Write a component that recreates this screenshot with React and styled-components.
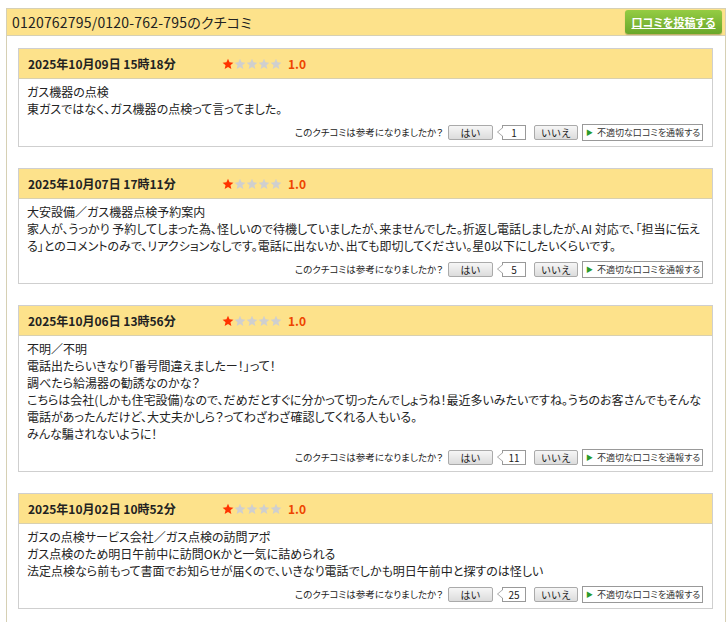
import React from 'react'
import styled, { createGlobalStyle } from 'styled-components'

const reviews = [
  {
    date: '2025年10月09日 15時18分',
    lines: ['ガス機器の点検', '東ガスではなく、ガス機器の点検って言ってました。'],
    count: 1,
  },
  {
    date: '2025年10月07日 17時11分',
    lines: [
      '大安設備／ガス機器点検予約案内',
      '家人が、うっかり 予約してしまった為、怪しいので待機していましたが、来ませんでした。折返し電話しましたが、AI 対応で、「担当に伝える」とのコメントのみで、リアクションなしです。電話に出ないか、出ても即切してください。星0以下にしたいくらいです。',
    ],
    count: 5,
  },
  {
    date: '2025年10月06日 13時56分',
    lines: [
      '不明／不明',
      '電話出たらいきなり「番号間違えましたー！」って！',
      '調べたら給湯器の勧誘なのかな？',
      'こちらは会社(しかも住宅設備)なので、だめだとすぐに分かって切ったんでしょうね！最近多いみたいですね。うちのお客さんでもそんな電話があったんだけど、大丈夫かしら？ってわざわざ確認してくれる人もいる。',
      'みんな騙されないように！',
    ],
    count: 11,
  },
  {
    date: '2025年10月02日 10時52分',
    lines: [
      'ガスの点検サービス会社／ガス点検の訪問アポ',
      'ガス点検のため明日午前中に訪問OKかと一気に詰められる',
      '法定点検なら前もって書面でお知らせが届くので、いきなり電話でしかも明日午前中と探すのは怪しい',
    ],
    count: 25,
  },
]

function Star({ on }) {
  return (
    <svg width="12" height="12" viewBox="0 0 24 24">
      <path
        d="M12 1.5l3.1 7.2 7.7.6-5.9 5.1 1.8 7.6L12 17.9 5.3 22l1.8-7.6L1.2 9.3l7.7-.6z"
        fill={on ? '#ff3300' : '#cfcfcf'}
      />
    </svg>
  )
}

function Review({ r }) {
  return (
    <Card>
      <CardHeader>
        <DateText>{r.date}</DateText>
        <Stars>
          {[0, 1, 2, 3, 4].map((i) => (
            <Star key={i} on={i < 1} />
          ))}
        </Stars>
        <Score>1.0</Score>
      </CardHeader>
      <Body>
        {r.lines.map((l, i) => (
          <Line key={i}>{l}</Line>
        ))}
        <Helpful>
          <Question>このクチコミは参考になりましたか？</Question>
          <VoteButton $w={45}>はい</VoteButton>
          <Count>{r.count}</Count>
          <VoteButton $w={44}>いいえ</VoteButton>
          <Report>
            <Arrow>▶</Arrow>不適切な口コミを通報する
          </Report>
        </Helpful>
      </Body>
    </Card>
  )
}

export default function App() {
  return (
    <>
      <GlobalStyle />
      <Panel>
        <PanelHeader>
          <Title>0120762795/0120-762-795のクチコミ</Title>
          <PostButton href="#">口コミを投稿する</PostButton>
        </PanelHeader>
        <List>
          {reviews.map((r) => (
            <Review key={r.date} r={r} />
          ))}
        </List>
      </Panel>
    </>
  )
}

const GlobalStyle = createGlobalStyle`
  body {
    margin: 0;
    background: #fff;
    color: #222;
    font-family: "Noto Sans CJK JP", "Noto Sans", sans-serif;
    font-feature-settings: "palt";
  }
`

const Panel = styled.div`
  margin: 8px 2px 0 6px;
  border: 1px solid #d6d0b4;
  border-bottom: none;
  min-height: 640px;
`

const PanelHeader = styled.div`
  height: 26px;
  background: #fde28b;
  border-bottom: 1px solid #d6d0b4;
  display: flex;
  align-items: center;
  justify-content: space-between;
  padding: 0 3px 0 5px;
`

const Title = styled.h1`
  margin: 0;
  font-size: 14px;
  font-weight: normal;
  color: #222;
  letter-spacing: 0.2px;
`

const PostButton = styled.a`
  display: flex;
  align-items: center;
  justify-content: center;
  width: 97px;
  height: 24px;
  border-radius: 3px;
  background: linear-gradient(#94cc43, #6aa72a);
  box-shadow: 0 1px 1px rgba(0, 0, 0, 0.25);
  color: #fff;
  font-size: 11px;
  font-weight: bold;
  text-decoration: underline;
`

const List = styled.div`
  display: flex;
  flex-direction: column;
  gap: 21px;
  padding: 12px 12px 0 11px;
`

const Card = styled.div`
  border: 1px solid #cfcfcf;
`

const CardHeader = styled.div`
  height: 29px;
  background: #fde28b;
  border-bottom: 1px solid #d8d0b0;
  display: flex;
  align-items: center;
  padding-left: 9px;
`

const DateText = styled.span`
  width: 194px;
  font-size: 12px;
  font-weight: bold;
  color: #222;
`

const Stars = styled.span`
  display: flex;
  gap: 0;
`

const Score = styled.span`
  margin-left: 6px;
  font-size: 12px;
  font-weight: bold;
  color: #ee4400;
`

const Body = styled.div`
  padding: 4px 9px 5px 8px;
  font-size: 12px;
  line-height: 17px;
  color: #222;
`

const Line = styled.p`
  margin: 0;
`

const Helpful = styled.div`
  display: flex;
  justify-content: flex-end;
  align-items: center;
  margin-top: 7px;
  height: 17px;
  font-size: 9.5px;
  line-height: 1;
  white-space: nowrap;
`

const Question = styled.span`
  margin-right: 5px;
  color: #222;
`

const VoteButton = styled.button`
  width: ${(p) => p.$w}px;
  height: 15px;
  padding: 0;
  border: 1px solid #aaa;
  border-radius: 2px;
  background: linear-gradient(#f6f6f6, #dcdcdc);
  font-family: inherit;
  font-size: 10px;
  color: #222;
  line-height: 13px;
`

const Count = styled.span`
  position: relative;
  margin: 0 8px 0 9px;
  width: 22px;
  height: 13px;
  border: 1px solid #999;
  background: #fff;
  text-align: center;
  line-height: 13px;
  font-size: 10px;

  &::before {
    content: '';
    position: absolute;
    left: -6px;
    top: 1px;
    border-style: solid;
    border-width: 5px 6px 5px 0;
    border-color: transparent #999 transparent transparent;
  }
  &::after {
    content: '';
    position: absolute;
    left: -5px;
    top: 1px;
    border-style: solid;
    border-width: 5px 6px 5px 0;
    border-color: transparent #fff transparent transparent;
  }
`

const Report = styled.span`
  margin-left: 4px;
  width: 116px;
  height: 15px;
  border: 1px solid #999;
  background: #fff;
  display: flex;
  align-items: center;
  padding-left: 3px;
  font-size: 9px;
  color: #333;
  white-space: nowrap;
  overflow: hidden;
`

const Arrow = styled.span`
  color: #2a9a2a;
  font-size: 7px;
  margin-right: 4px;
`
